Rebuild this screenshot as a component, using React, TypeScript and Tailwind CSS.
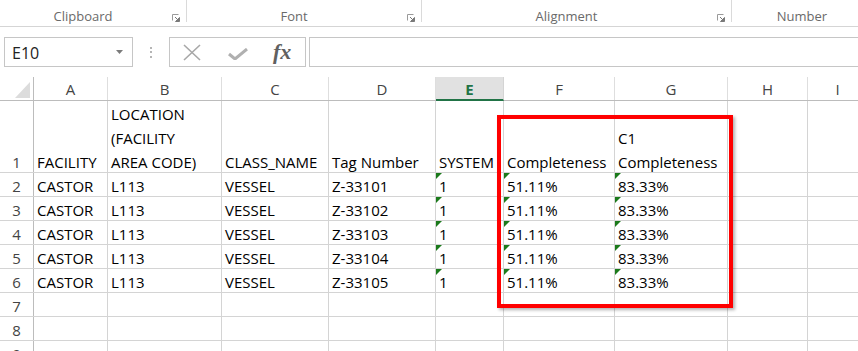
import React from "react";

const widths = [
  "w-[34px]",
  "w-[74px]",
  "w-[114px]",
  "w-[107px]",
  "w-[107px]",
  "w-[68px]",
  "w-[111px]",
  "w-[113px]",
  "w-[80px]",
  "w-[60px]",
];

const letters = ["A", "B", "C", "D", "E", "F", "G", "H", "I"];

const header: string[][] = [
  ["FACILITY"],
  ["LOCATION", "(FACILITY", "AREA CODE)"],
  ["CLASS_NAME"],
  ["Tag Number"],
  ["SYSTEM"],
  ["Completeness"],
  ["C1", "Completeness"],
  [],
  [],
];

const rows = [1, 2, 3, 4, 5].map((n) => [
  "CASTOR",
  "L113",
  "VESSEL",
  `Z-3310${n}`,
  "1",
  "51.11%",
  "83.33%",
  "",
  "",
]);

// columns E, F, G hold numbers stored as text
const flagged = [4, 5, 6];

function Launcher() {
  return (
    <svg width="8" height="8" viewBox="0 0 8 8" className="mt-[14px] ml-[6px]">
      <path d="M0.5 6.5V0.5H6.5" fill="none" stroke="#9a9a9a" strokeWidth="1" />
      <path d="M3 3L7 7M7.5 3.5V7.5H3.5Z" fill="#7a7a7a" stroke="#7a7a7a" strokeWidth="1" />
    </svg>
  );
}

function Ribbon() {
  const groups = [
    { label: "Clipboard", w: "w-[187px]", launcher: true, sep: true },
    { label: "Font", w: "w-[235px]", launcher: true, sep: true },
    { label: "Alignment", w: "w-[310px]", launcher: true, sep: true },
    { label: "Number", w: "w-[140px]", launcher: false, sep: false },
  ];
  return (
    <div className="flex h-[27px] border-b border-[#d5d5d5] overflow-hidden">
      {groups.map((g) => (
        <div key={g.label} className={`${g.w} shrink-0 flex h-full`}>
          <div className="flex-1 text-center text-[13px] leading-[18px] pt-[7px] text-[#6a6a6a]">
            {g.label}
          </div>
          {g.launcher && (
            <div className="w-[20px] flex items-start">
              <Launcher />
            </div>
          )}
          {g.sep && <div className="w-px h-[22px] bg-[#dadada]" />}
        </div>
      ))}
    </div>
  );
}

function FormulaBar() {
  return (
    <div className="flex items-start h-[50px] pt-[10px]">
      <div className="ml-[4px] w-[129px] h-[30px] border border-[#c6c6c6] flex items-center justify-between pl-[7px] pr-[9px]">
        <span className="text-[16px] text-[#222] pt-[1px]">E10</span>
        <svg width="7" height="4" viewBox="0 0 7 4">
          <path d="M0 0H7L3.5 4Z" fill="#7b7b7b" />
        </svg>
      </div>
      <div className="w-[36px] h-[30px] flex flex-col items-center justify-center gap-[2.5px]">
        <div className="w-[2px] h-[2px] bg-[#b5b5b5]" />
        <div className="w-[2px] h-[2px] bg-[#b5b5b5]" />
        <div className="w-[2px] h-[2px] bg-[#b5b5b5]" />
      </div>
      <div className="w-[137px] h-[30px] border border-[#c6c6c6] flex items-center">
        <svg width="18" height="17" viewBox="0 0 18 17" className="ml-[13px]">
          <path d="M1 1L17 16M17 1L1 16" stroke="#a8a8a8" strokeWidth="1.6" />
        </svg>
        <svg width="20" height="12" viewBox="0 0 20 12" className="ml-[27px] mt-[4px]">
          <path d="M1 6L7 11L19 1" fill="none" stroke="#b0b0b0" strokeWidth="3" />
        </svg>
        <span className="ml-[25px] italic font-bold text-[22px] leading-none text-[#606060] [font-family:'Liberation_Serif',serif]">
          fx
        </span>
      </div>
      <div className="ml-[3px] flex-1 h-[30px] border-y border-l border-[#c6c6c6]" />
    </div>
  );
}

function Cell({
  col,
  lines,
  flag,
}: {
  col: number;
  lines: string[];
  flag?: boolean;
}) {
  return (
    <div
      className={`${widths[col]} shrink-0 relative flex items-end border-r border-[#d4d4d4] pl-[3px] overflow-hidden`}
    >
      {flag && (
        <div className="absolute left-0 top-0 w-0 h-0 border-t-[6px] border-r-[6px] border-t-[#1b7a1b] border-r-transparent" />
      )}
      <div className="leading-[24px] -mb-[2px] whitespace-nowrap">
        {lines.map((l, i) => (
          <div key={i}>{l}</div>
        ))}
      </div>
    </div>
  );
}

function RowHead({ n }: { n: number }) {
  return (
    <div className="w-[34px] shrink-0 flex items-end justify-center border-r border-[#bcbcbc] text-[#444]">
      <div className="leading-[24px] -mb-[2px]">{n}</div>
    </div>
  );
}

function Sheet() {
  return (
    <div className="relative">
      {/* column headers */}
      <div className="flex h-[24px] border-b border-[#bcbcbc]">
        <div className="w-[34px] shrink-0 border-r border-[#bcbcbc] flex items-end justify-end pr-[3px] pb-[2px]">
          <svg width="15" height="16" viewBox="0 0 15 16">
            <path d="M15 0V16H0Z" fill="#dcdcdc" />
          </svg>
        </div>
        {letters.map((l, i) =>
          l === "E" ? (
            <div
              key={l}
              className={`${widths[i + 1]} shrink-0 -mb-px h-[24px] bg-[#e1e1e1] border-r border-[#d4d4d4] border-b-2 border-b-[#217346] text-center leading-[23px] pt-px font-bold text-[#217346]`}
            >
              {l}
            </div>
          ) : (
            <div
              key={l}
              className={`${widths[i + 1]} shrink-0 border-r border-[#dedede] text-center leading-[23px] pt-px text-[#444]`}
            >
              {l}
            </div>
          )
        )}
      </div>

      {/* row 1 */}
      <div className="flex h-[72px] border-b border-[#d4d4d4]">
        <RowHead n={1} />
        {header.map((lines, i) => (
          <Cell key={i} col={i + 1} lines={lines} />
        ))}
      </div>

      {rows.map((r, ri) => (
        <div key={ri} className="flex h-[24px] border-b border-[#d4d4d4]">
          <RowHead n={ri + 2} />
          {r.map((v, i) => (
            <Cell key={i} col={i + 1} lines={v ? [v] : []} flag={flagged.includes(i)} />
          ))}
        </div>
      ))}

      {[7, 8, 9].map((n) => (
        <div key={n} className="flex h-[24px] border-b border-[#d4d4d4]">
          <RowHead n={n} />
          {letters.map((l, i) => (
            <Cell key={l} col={i + 1} lines={[]} />
          ))}
        </div>
      ))}

      {/* highlight drawn over the sheet */}
      <div className="absolute left-[497px] top-[38px] w-[236px] h-[193px] border-4 border-[#ff0000] shadow-[2px_2px_3px_rgba(0,0,0,0.3)]" />
    </div>
  );
}

export default function App() {
  return (
    <div className="w-[858px] h-[351px] overflow-hidden bg-white text-black text-[15px] [font-family:'Open_Sans',sans-serif]">
      <Ribbon />
      <FormulaBar />
      <Sheet />
    </div>
  );
}
